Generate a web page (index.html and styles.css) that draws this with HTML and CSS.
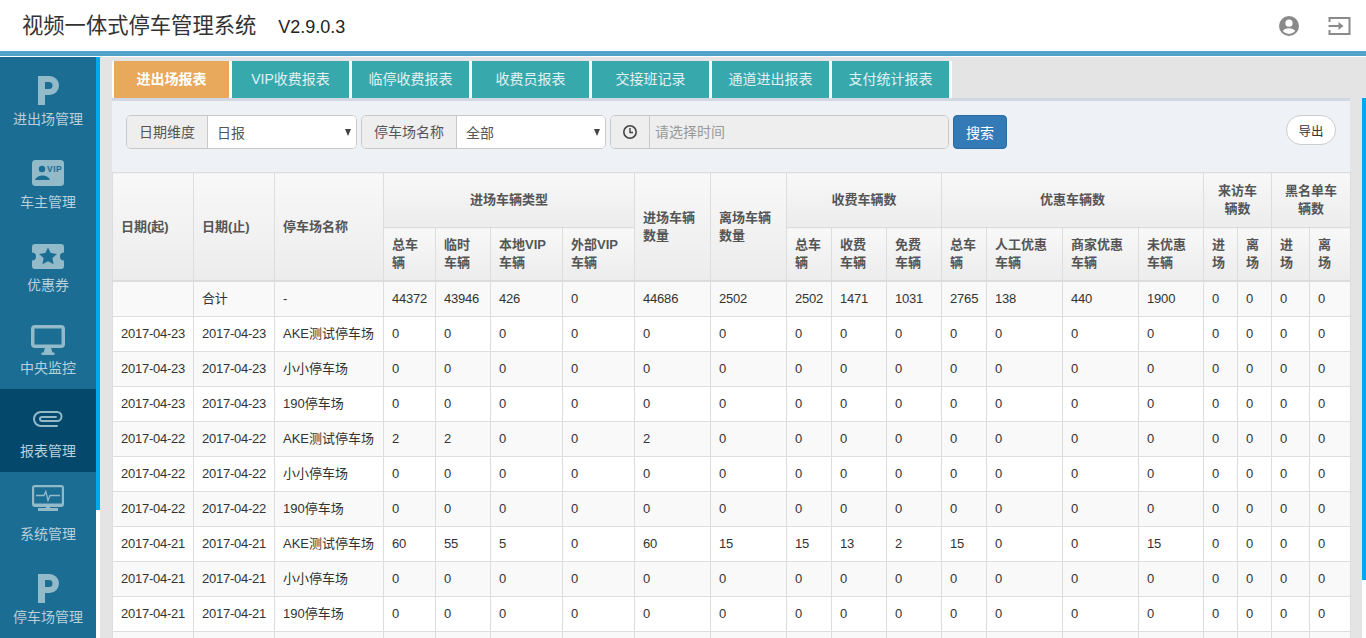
FILE: index.html
```html
<!DOCTYPE html>
<html lang="zh">
<head>
<meta charset="utf-8">
<title>视频一体式停车管理系统</title>
<link rel="stylesheet" href="styles.css">
</head>
<body>
<header class="topbar">
  <div class="brand"><span class="brand-name">视频一体式停车管理系统</span><span class="brand-ver">V2.9.0.3</span></div>
  <div class="top-icons">
    <svg class="ico-user" viewBox="0 0 22 22"><path fill="#8a8a8a" fill-rule="evenodd" d="M11 1a10 10 0 1 0 0 20 10 10 0 0 0 0-20zm0 3.600a3.600 3.600 0 1 1 0 7.200 3.600 3.600 0 0 1 0-7.200zM11 19a8 8 0 0 1-6.200-3c.6-1.700 3.700-2.800 6.200-2.800s5.600 1.100 6.200 2.800A8 8 0 0 1 11 19z"/></svg>
    <svg class="ico-exit" viewBox="0 0 22 20"><path fill="none" stroke="#8a8a8a" stroke-width="2" d="M1 6V2h20v16H1v-4"/><path fill="none" stroke="#8a8a8a" stroke-width="2" d="M0 10h12"/><path fill="#8a8a8a" d="M10 6l5 4-5 4z"/></svg>
  </div>
</header>
<div class="layout">
  <nav class="sidebar">
    <a class="nav-item"><span class="nav-icon"><svg width="21" height="29" viewBox="0 0 21 29"><path fill="#93bac9" fill-rule="evenodd" d="M0 0h11.500a9.500 9.500 0 0 1 0 19H7v10H0zm7 6v7h4a3.500 3.500 0 0 0 0-7z"/></svg></span><span class="nav-text">进出场管理</span></a>
    <a class="nav-item"><span class="nav-icon"><svg width="32" height="26" viewBox="0 0 32 26"><rect width="32" height="26" rx="3.500" fill="#93bac9"/><circle cx="10" cy="9" r="3.200" fill="#1b6d93"/><path fill="#1b6d93" d="M3 20c1-3 4-4.500 7.500-4.500s6.500 1.500 7.500 4.500z"/><text x="15" y="12" class="vip">VIP</text></svg></span><span class="nav-text">车主管理</span></a>
    <a class="nav-item"><span class="nav-icon"><svg width="32" height="25" viewBox="0 0 32 25"><path fill="#93bac9" fill-rule="evenodd" d="M3 0h26a3 3 0 0 1 3 3v5.500a4 4 0 0 0 0 8V22a3 3 0 0 1-3 3H3a3 3 0 0 1-3-3v-5.500a4 4 0 0 0 0-8V3a3 3 0 0 1 3-3zm13 3.500l-2.700 5.600-6.300.8 4.600 4.200-1.200 6.200 5.600-3.100 5.600 3.100-1.200-6.200 4.600-4.200-6.300-.8z"/></svg></span><span class="nav-text">优惠券</span></a>
    <a class="nav-item"><span class="nav-icon shift-monitor"><svg width="34" height="30" viewBox="0 0 34 30"><path fill="#93bac9" fill-rule="evenodd" d="M4 0h26a4 4 0 0 1 4 4v15a4 4 0 0 1-4 4H4a4 4 0 0 1-4-4V4a4 4 0 0 1 4-4zm-.500 3.500v16h27v-16z"/><path fill="#93bac9" d="M14 23h6l1.500 4.500h2V30H10.500v-2.500h2z"/></svg></span><span class="nav-text">中央监控</span></a>
    <a class="nav-item active"><span class="nav-icon shift-clip"><svg width="30" height="16" viewBox="0 0 30 16"><path fill="none" stroke="#93bac9" stroke-width="2" stroke-linecap="round" d="M24 15H8A7 7 0 0 1 8 1h16a4.500 4.500 0 0 1 0 9H9a2 2 0 0 1 0-4h14"/></svg></span><span class="nav-text">报表管理</span></a>
    <a class="nav-item"><span class="nav-icon shift-sys"><svg width="32" height="26" viewBox="0 0 32 26"><path fill="#93bac9" fill-rule="evenodd" d="M3 0h26a3 3 0 0 1 3 3v16a3 3 0 0 1-3 3H3a3 3 0 0 1-3-3V3a3 3 0 0 1 3-3zm-.800 2.200v16.300h27.600V2.200z"/><path fill="#93bac9" d="M14 22h4v1h8v3H6v-3h8z"/><path fill="none" stroke="#93bac9" stroke-width="1.300" d="M4 10.500h8l1.800-4 2.200 9 2-5h10"/></svg></span><span class="nav-text">系统管理</span></a>
    <a class="nav-item"><span class="nav-icon"><svg width="21" height="29" viewBox="0 0 21 29"><path fill="#93bac9" fill-rule="evenodd" d="M0 0h11.500a9.500 9.500 0 0 1 0 19H7v10H0zm7 6v7h4a3.500 3.500 0 0 0 0-7z"/></svg></span><span class="nav-text">停车场管理</span></a>
  </nav>
  <div class="side-scroll"><div class="side-thumb"></div></div>
  <main class="content">
    <ul class="tabs">
      <li class="tab on">进出场报表</li>
      <li class="tab">VIP收费报表</li>
      <li class="tab">临停收费报表</li>
      <li class="tab">收费员报表</li>
      <li class="tab">交接班记录</li>
      <li class="tab">通道进出报表</li>
      <li class="tab">支付统计报表</li>
    </ul>
    <section class="panel">
      <div class="filters">
        <div class="group g-date"><span class="addon">日期维度</span><span class="select">日报<i class="caret"></i></span></div>
        <div class="group g-park"><span class="addon">停车场名称</span><span class="select">全部<i class="caret"></i></span></div>
        <div class="group g-time"><span class="addon addon-ico"><svg width="16" height="16" viewBox="0 0 16 16"><circle cx="8" cy="8" r="6.200" fill="none" stroke="#444" stroke-width="1.600"/><path d="M8 4v4.500h3" fill="none" stroke="#444" stroke-width="1.400"/></svg></span><span class="time-input">请选择时间</span></div>
        <button class="btn-search">搜索</button>
        <button class="btn-export">导出</button>
      </div>
      <table class="grid">
        <colgroup>
          <col class="c81"><col class="c81"><col class="c109"><col class="c52"><col class="c55"><col class="c72"><col class="c72"><col class="c76"><col class="c76"><col class="c45"><col class="c55"><col class="c55"><col class="c45"><col class="c76"><col class="c76"><col class="c65"><col class="c34"><col class="c34"><col class="c38"><col class="c41">
        </colgroup>
        <thead>
          <tr class="h1">
            <th rowspan="2">日期(起)</th><th rowspan="2">日期(止)</th><th rowspan="2">停车场名称</th>
            <th colspan="4" class="mid">进场车辆类型</th>
            <th rowspan="2">进场车辆数量</th><th rowspan="2">离场车辆数量</th>
            <th colspan="3" class="mid">收费车辆数</th>
            <th colspan="4" class="mid">优惠车辆数</th>
            <th colspan="2" class="mid">来访车辆数</th>
            <th colspan="2" class="mid">黑名单车辆数</th>
          </tr>
          <tr class="h2">
            <th>总车辆</th><th>临时车辆</th><th>本地VIP车辆</th><th>外部VIP车辆</th>
            <th>总车辆</th><th>收费车辆</th><th>免费车辆</th>
            <th>总车辆</th><th>人工优惠车辆</th><th>商家优惠车辆</th><th>未优惠车辆</th>
            <th>进场</th><th>离场</th><th>进场</th><th>离场</th>
          </tr>
        </thead>
        <tbody>
          <tr><td></td><td>合计</td><td>-</td><td>44372</td><td>43946</td><td>426</td><td>0</td><td>44686</td><td>2502</td><td>2502</td><td>1471</td><td>1031</td><td>2765</td><td>138</td><td>440</td><td>1900</td><td>0</td><td>0</td><td>0</td><td>0</td></tr>
          <tr><td>2017-04-23</td><td>2017-04-23</td><td>AKE测试停车场</td><td>0</td><td>0</td><td>0</td><td>0</td><td>0</td><td>0</td><td>0</td><td>0</td><td>0</td><td>0</td><td>0</td><td>0</td><td>0</td><td>0</td><td>0</td><td>0</td><td>0</td></tr>
          <tr><td>2017-04-23</td><td>2017-04-23</td><td>小小停车场</td><td>0</td><td>0</td><td>0</td><td>0</td><td>0</td><td>0</td><td>0</td><td>0</td><td>0</td><td>0</td><td>0</td><td>0</td><td>0</td><td>0</td><td>0</td><td>0</td><td>0</td></tr>
          <tr><td>2017-04-23</td><td>2017-04-23</td><td>190停车场</td><td>0</td><td>0</td><td>0</td><td>0</td><td>0</td><td>0</td><td>0</td><td>0</td><td>0</td><td>0</td><td>0</td><td>0</td><td>0</td><td>0</td><td>0</td><td>0</td><td>0</td></tr>
          <tr><td>2017-04-22</td><td>2017-04-22</td><td>AKE测试停车场</td><td>2</td><td>2</td><td>0</td><td>0</td><td>2</td><td>0</td><td>0</td><td>0</td><td>0</td><td>0</td><td>0</td><td>0</td><td>0</td><td>0</td><td>0</td><td>0</td><td>0</td></tr>
          <tr><td>2017-04-22</td><td>2017-04-22</td><td>小小停车场</td><td>0</td><td>0</td><td>0</td><td>0</td><td>0</td><td>0</td><td>0</td><td>0</td><td>0</td><td>0</td><td>0</td><td>0</td><td>0</td><td>0</td><td>0</td><td>0</td><td>0</td></tr>
          <tr><td>2017-04-22</td><td>2017-04-22</td><td>190停车场</td><td>0</td><td>0</td><td>0</td><td>0</td><td>0</td><td>0</td><td>0</td><td>0</td><td>0</td><td>0</td><td>0</td><td>0</td><td>0</td><td>0</td><td>0</td><td>0</td><td>0</td></tr>
          <tr><td>2017-04-21</td><td>2017-04-21</td><td>AKE测试停车场</td><td>60</td><td>55</td><td>5</td><td>0</td><td>60</td><td>15</td><td>15</td><td>13</td><td>2</td><td>15</td><td>0</td><td>0</td><td>15</td><td>0</td><td>0</td><td>0</td><td>0</td></tr>
          <tr><td>2017-04-21</td><td>2017-04-21</td><td>小小停车场</td><td>0</td><td>0</td><td>0</td><td>0</td><td>0</td><td>0</td><td>0</td><td>0</td><td>0</td><td>0</td><td>0</td><td>0</td><td>0</td><td>0</td><td>0</td><td>0</td><td>0</td></tr>
          <tr><td>2017-04-21</td><td>2017-04-21</td><td>190停车场</td><td>0</td><td>0</td><td>0</td><td>0</td><td>0</td><td>0</td><td>0</td><td>0</td><td>0</td><td>0</td><td>0</td><td>0</td><td>0</td><td>0</td><td>0</td><td>0</td><td>0</td></tr>
          <tr><td></td><td></td><td></td><td></td><td></td><td></td><td></td><td></td><td></td><td></td><td></td><td></td><td></td><td></td><td></td><td></td><td></td><td></td><td></td><td></td></tr>
        </tbody>
      </table>
    </section>
  </main>
  <div class="main-scroll"><div class="main-thumb"></div></div>
</div>
</body>
</html>
```
FILE: styles.css
```css
* { box-sizing: border-box; }
html, body { margin: 0; padding: 0; height: 100%; overflow: hidden; }
body { font-family: "Liberation Sans", "Noto Sans CJK SC", sans-serif; font-size: 13px; color: #333; background: #e4e4e4; }
.topbar { height: 57px; display: flex; align-items: flex-start; justify-content: space-between; background: #fff; border-bottom: 1px solid #fff; position: relative; }
.topbar::after { content: ""; position: absolute; left: 0; right: 0; top: 51px; height: 5px; background: #51a3c9; }
.brand { padding: 11px 0 0 22px; display: flex; align-items: baseline; }
.brand-name { font-size: 21.300px; line-height: 30px; color: #333; }
.brand-ver { font-size: 18px; margin-left: 22px; color: #222; }
.top-icons { display: flex; align-items: center; gap: 28px; padding: 15px 15px 0 0; }
.ico-user { width: 22px; height: 22px; }
.ico-exit { width: 23px; height: 20px; }
.layout { display: flex; height: 581px; overflow: hidden; }
.sidebar { width: 96px; flex: none; background: #1b6d93; }
.nav-item { display: flex; flex-direction: column; align-items: center; height: 83px; color: #b7d0dc; font-size: 14px; }
.nav-item.active { background: #04486b; }
.nav-icon { height: 44px; margin-top: 11px; flex: none; display: flex; align-items: center; justify-content: center; }
.shift-monitor { padding-top: 2px; }
.shift-clip { padding-bottom: 6px; }
.shift-sys { padding-bottom: 14px; }
.vip { font-family: "Liberation Sans", sans-serif; font-size: 8.500px; font-weight: 700; letter-spacing: .5px; fill: #1b6d93; }
.nav-text { line-height: 20px; margin-top: -3px; }
.side-scroll { width: 4px; flex: none; background: #fff; }
.side-thumb { height: 453px; background: #00a9ee; }
.content { width: 1262px; flex: none; padding: 4px 12px 0 12px; }
.tabs { list-style: none; margin: 0; padding: 0; display: flex; height: 37px; }
.tab { width: 120px; height: 37px; background: #37a9ad; color: #e3f0f1; text-align: center; line-height: 37px; border-right: 3px solid #fff; font-size: 14px; }
.tab.on { background: #e8a95c; color: #fff; font-weight: 700; border-left: 2px solid #fff; }
.panel { border-top: 3px solid #d2d8e3; background: #eef1f6; }
.filters { display: flex; align-items: flex-start; padding: 14px 14px 23px 14px; height: 71px; }
.group { display: flex; height: 34px; border: 1px solid #c9c9c9; border-radius: 5px; overflow: hidden; }
.g-date { width: 231px; }
.g-park { width: 245px; margin-left: 4px; }
.g-time { width: 339px; margin-left: 4px; }
.addon { flex: none; padding: 0 12px; background: #eee; color: #555; line-height: 32px; font-size: 14px; border-right: 1px solid #c9c9c9; }
.addon-ico { width: 39px; padding: 0; display: flex; align-items: center; justify-content: center; }
.select { flex: 1; background: #fff; color: #555; line-height: 34px; padding-left: 9px; font-size: 14px; position: relative; }
.caret { position: absolute; right: 5px; top: 13px; border-left: 3.500px solid transparent; border-right: 3.500px solid transparent; border-top: 7px solid #444; }
.time-input { flex: 1; background: #eee; color: #999; line-height: 32px; padding-left: 5px; font-size: 14px; }
.btn-search { width: 54px; height: 34px; margin-left: 4px; background: #337ab7; border: 1px solid #2e6da4; border-radius: 4px; color: #fff; font: inherit; font-size: 14px; padding: 0; }
.btn-export { width: 50px; height: 30px; margin-left: auto; background: #fff; border: 1px solid #ccc; border-radius: 15px; color: #333; font: inherit; font-size: 12.500px; padding: 0; }
.grid { width: 1238px; table-layout: fixed; border-collapse: collapse; background: #fff; }
.c81 { width: 81px; } .c109 { width: 109px; } .c52 { width: 52px; } .c55 { width: 55px; } .c72 { width: 72px; } .c76 { width: 76px; } .c45 { width: 45px; } .c65 { width: 65px; } .c34 { width: 34px; } .c38 { width: 38px; } .c41 { width: 41px; }
.grid th, .grid td { border: 1px solid #ddd; text-align: left; font-size: 13px; line-height: 18px; vertical-align: middle; }
.grid th { padding: 8px; background: linear-gradient(#f8f8f8, #ececec); color: #555; font-weight: 700; word-break: break-all; }
.grid thead tr:last-child th, .grid th[rowspan] { border-bottom-width: 2px; }
.grid th.mid { text-align: center; }
.h1 th { height: 55px; }
.h2 th { height: 53px; }
.grid td { height: 35px; padding: 0 8px; color: #333; white-space: nowrap; }
.grid td:nth-child(-n+2) { letter-spacing: -.25px; }
.grid td:nth-child(n+4) { letter-spacing: -.2px; }
.grid tbody tr:nth-child(odd) td { background: #f9f9f9; }
.main-scroll { position: absolute; right: 0; top: 98px; width: 4px; height: 540px; background: #fff; }
.main-thumb { height: 482px; background: #00a9ee; }
```
